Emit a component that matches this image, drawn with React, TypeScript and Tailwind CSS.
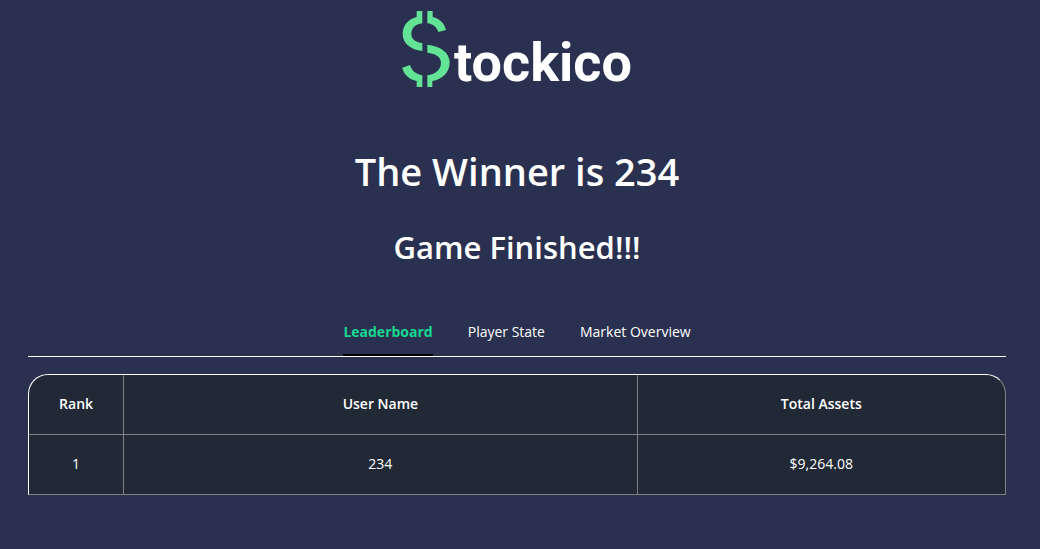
const tabs = ["Leaderboard", "Player State", "Market Overview"];

const players = [{ rank: 1, name: "234", assets: "$9,264.08" }];

function Logo() {
  return (
    <div className="flex items-start justify-center gap-1" aria-label="Stockico">
      <svg viewBox="38 33 142 228" className="h-[76px] w-[48px] fill-[#63e396]" aria-hidden="true">
        <path d="M81 33H98V70C79 72 65 84 65 102C65 118 78 127 98 129V153C63 149 39 131 39 102C39 76 56 57 81 51Z" />
        <path d="M113 33H129V51C150 56 164 69 169 90L146 96C142 82 130 72 113 70Z" />
        <path d="M113 134C152 138 180 157 180 188C180 216 158 238 128 243V261H113V226C137 223 154 209 154 188C154 171 138 161 113 158Z" />
        <path d="M38 203L61 195C66 212 79 223 98 226V261H81V243C58 238 42 223 38 203Z" />
      </svg>
      <span className="pt-5 font-['Roboto',sans-serif] text-[54px] leading-[64px] font-bold">
        tockico
      </span>
    </div>
  );
}

export default function App() {
  return (
    <div className="min-h-screen bg-[#2a3050] pt-[11px] pr-[34px] pb-8 pl-7 font-['Open_Sans','Noto_Sans',sans-serif] text-[15px] leading-6 text-white">
      <header>
        <Logo />
      </header>
      <main className="pt-12 text-center">
        <h1 className="text-[38px] leading-[56px] font-semibold">The Winner is 234</h1>
        <h2 className="mt-[26px] text-[31px] leading-[44px] font-semibold">Game Finished!!!</h2>
        <nav className="mt-[47px] flex justify-center gap-[35px] border-b border-white" aria-label="Game views">
          {tabs.map((tab, i) => (
            <button
              key={tab}
              type="button"
              className={
                i === 0
                  ? "border-b-2 border-black pt-1 pb-[10px] text-[14px] font-bold text-[#17d992]"
                  : "border-b-2 border-transparent pt-1 pb-[10px] text-[14px]"
              }
            >
              {tab}
            </button>
          ))}
        </nav>
        <div className="mt-[17px] overflow-hidden rounded-t-[20px] border border-t-white border-r-[#808080] border-b-[#808080] border-l-white bg-[#212936]">
          <table className="w-full border-collapse text-[14px]">
            <thead>
              <tr className="h-[59px] border-b border-[#808080]">
                <th className="w-[9.7%] border-r border-[#808080] font-semibold">Rank</th>
                <th className="w-[52.6%] border-r border-[#808080] font-semibold">User Name</th>
                <th className="font-semibold">Total Assets</th>
              </tr>
            </thead>
            <tbody>
              {players.map((p) => (
                <tr key={p.rank} className="h-[60px]">
                  <td className="border-r border-[#808080]">{p.rank}</td>
                  <td className="border-r border-[#808080]">{p.name}</td>
                  <td>{p.assets}</td>
                </tr>
              ))}
            </tbody>
          </table>
        </div>
      </main>
    </div>
  );
}
